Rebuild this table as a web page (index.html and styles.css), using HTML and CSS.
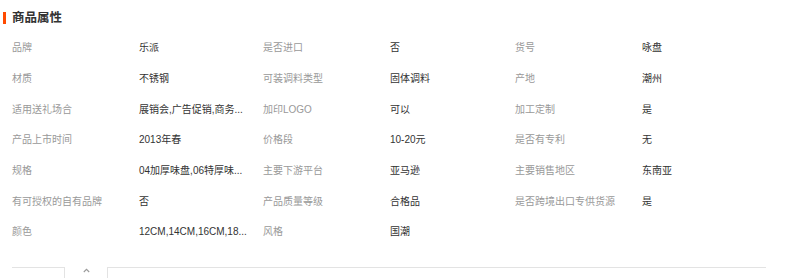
FILE: index.html
```html
<!DOCTYPE html>
<html lang="zh-CN">
<head>
<meta charset="utf-8">
<title>商品属性</title>
<link rel="stylesheet" href="styles.css">
</head>
<body>
<div class="attrs">
  <div class="attrs-head">
    <span class="attrs-mark"></span>
    <h2 class="attrs-title">商品属性</h2>
  </div>
  <div class="attrs-grid">
    <div class="cell"><span class="label">品牌</span><span class="value">乐派</span></div>
    <div class="cell"><span class="label">是否进口</span><span class="value">否</span></div>
    <div class="cell"><span class="label">货号</span><span class="value">咏盘</span></div>

    <div class="cell"><span class="label">材质</span><span class="value">不锈钢</span></div>
    <div class="cell"><span class="label">可装调料类型</span><span class="value">固体调料</span></div>
    <div class="cell"><span class="label">产地</span><span class="value">潮州</span></div>

    <div class="cell"><span class="label">适用送礼场合</span><span class="value">展销会,广告促销,商务...</span></div>
    <div class="cell"><span class="label">加印LOGO</span><span class="value">可以</span></div>
    <div class="cell"><span class="label">加工定制</span><span class="value">是</span></div>

    <div class="cell"><span class="label">产品上市时间</span><span class="value">2013年春</span></div>
    <div class="cell"><span class="label">价格段</span><span class="value">10-20元</span></div>
    <div class="cell"><span class="label">是否有专利</span><span class="value">无</span></div>

    <div class="cell"><span class="label">规格</span><span class="value">04加厚味盘,06特厚味...</span></div>
    <div class="cell"><span class="label">主要下游平台</span><span class="value">亚马逊</span></div>
    <div class="cell"><span class="label">主要销售地区</span><span class="value">东南亚</span></div>

    <div class="cell"><span class="label">有可授权的自有品牌</span><span class="value">否</span></div>
    <div class="cell"><span class="label">产品质量等级</span><span class="value">合格品</span></div>
    <div class="cell"><span class="label">是否跨境出口专供货源</span><span class="value">是</span></div>

    <div class="cell"><span class="label">颜色</span><span class="value">12CM,14CM,16CM,18...</span></div>
    <div class="cell"><span class="label">风格</span><span class="value">国潮</span></div>
    <div class="cell"></div>
  </div>
  <div class="tabs">
    <div class="tab-left"></div>
    <div class="tab-toggle">
      <svg width="7" height="5" viewBox="0 0 7 5"><polyline points="0.8,4 3.5,1.3 6.2,4" fill="none" stroke="#9a9a9a" stroke-width="1.1"/></svg>
    </div>
    <div class="tab-right"></div>
  </div>
</div>
</body>
</html>
```
FILE: styles.css
```css
html, body {
  margin: 0;
  padding: 0;
  background: #ffffff;
}
body {
  font-family: "Liberation Sans", "Noto Sans CJK SC", sans-serif;
  color: #333;
}
.attrs {
  width: 789px;
}
.attrs-head {
  display: flex;
  align-items: center;
  height: 33px;
  padding-top: 3px;
  box-sizing: border-box;
}
.attrs-mark {
  display: block;
  width: 3px;
  height: 12px;
  margin-left: 3px;
  margin-right: 6px;
  background: #ff4a00;
}
.attrs-title {
  margin: 0;
  font-size: 12.5px;
  font-weight: 700;
  color: #333;
  line-height: 16px;
}
.attrs-grid {
  display: grid;
  grid-template-columns: 251px 252px 252px;
  grid-auto-rows: 30.67px;
  padding-left: 12px;
}
.cell {
  display: flex;
  align-items: center;
  font-size: 10px;
  line-height: 14px;
}
.label {
  flex: 0 0 127px;
  color: #999;
  white-space: nowrap;
}
.value {
  color: #333;
  white-space: nowrap;
}
.tabs {
  display: flex;
  margin-top: 19px;
  height: 12px;
  padding-left: 12px;
}
.tab-left {
  width: 52px;
  border-top: 1px solid #e3e3e3;
  border-right: 1px solid #e3e3e3;
}
.tab-toggle {
  width: 42px;
  display: flex;
  justify-content: center;
  padding-top: 1px;
}
.tab-toggle svg {
  display: block;
}
.tab-right {
  width: 658px;
  border-top: 1px solid #e3e3e3;
  border-left: 1px solid #e3e3e3;
}
```
